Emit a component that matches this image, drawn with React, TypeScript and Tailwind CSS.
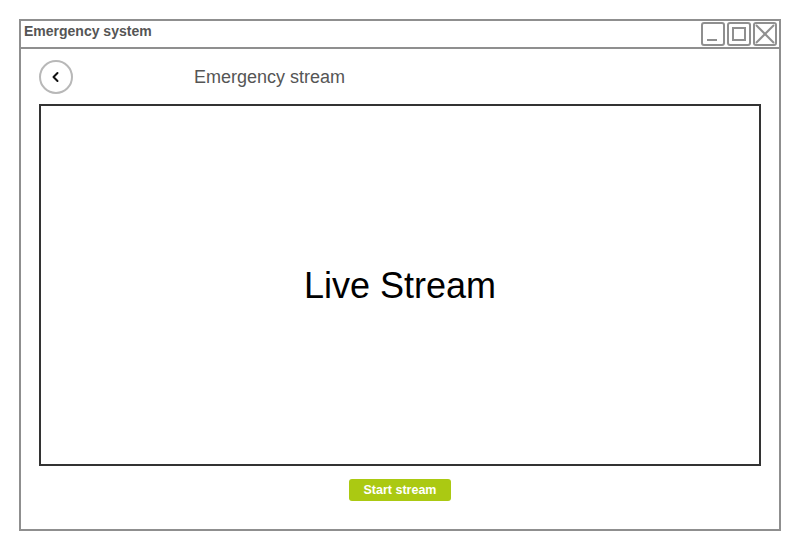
const WinButton = ({ kind }: { kind: 'min' | 'max' | 'close' }) => (
  <div className="w-[24px] h-[24px] border-2 border-[#8f8f8f] rounded-[3px] flex items-center justify-center">
    <svg width="20" height="20" viewBox="0 0 20 20" fill="none" stroke="#8f8f8f" strokeWidth="2">
      {kind === 'min' && <line x1="4" y1="16" x2="14" y2="16" />}
      {kind === 'max' && <rect x="4" y="4" width="12" height="12" />}
      {kind === 'close' && (
        <>
          <line x1="1" y1="1" x2="19" y2="19" />
          <line x1="19" y1="1" x2="1" y2="19" />
        </>
      )}
    </svg>
  </div>
);

const App = () => {
  return (
    <div className="w-[800px] h-[550px] bg-white pt-[19px] pl-[19px] font-['Liberation_Sans',Arial,sans-serif]">
      <div className="w-[762px] h-[512px] border-2 border-[#8f8f8f] flex flex-col">
        {/* title bar */}
        <div className="h-[28px] border-b-2 border-[#8f8f8f] flex items-start justify-between shrink-0">
          <span className="pl-[3px] pt-[2px] text-[14px] font-bold text-[#555] leading-[16px]">
            Emergency system
          </span>
          <div className="flex gap-[2px] pr-[2px] pt-[1px]">
            <WinButton kind="min" />
            <WinButton kind="max" />
            <WinButton kind="close" />
          </div>
        </div>

        {/* header */}
        <div className="flex items-center pl-[18px] pt-[11px]">
          <button className="w-[34px] h-[34px] rounded-full border-2 border-[#b8b8b8] flex items-center justify-center bg-white">
            <svg width="14" height="14" viewBox="0 0 14 14" fill="none" stroke="#111" strokeWidth="2" strokeLinecap="round" strokeLinejoin="round">
              <polyline points="8.5,3 4.5,7 8.5,11" />
            </svg>
          </button>
          <span className="ml-[121px] text-[18px] text-[#555] leading-none">Emergency stream</span>
        </div>

        {/* stream area */}
        <div className="mx-[18px] mt-[10px] h-[362px] border-2 border-[#333] flex items-center justify-center">
          <span className="text-[36px] text-black leading-none pt-[2px]">Live Stream</span>
        </div>

        <div className="flex justify-center mt-[13px]">
          <button className="w-[102px] h-[22px] rounded-[3px] bg-[#abc912] text-white text-[12.5px] font-bold leading-none">
            Start stream
          </button>
        </div>
      </div>
    </div>
  );
};

export default App;
